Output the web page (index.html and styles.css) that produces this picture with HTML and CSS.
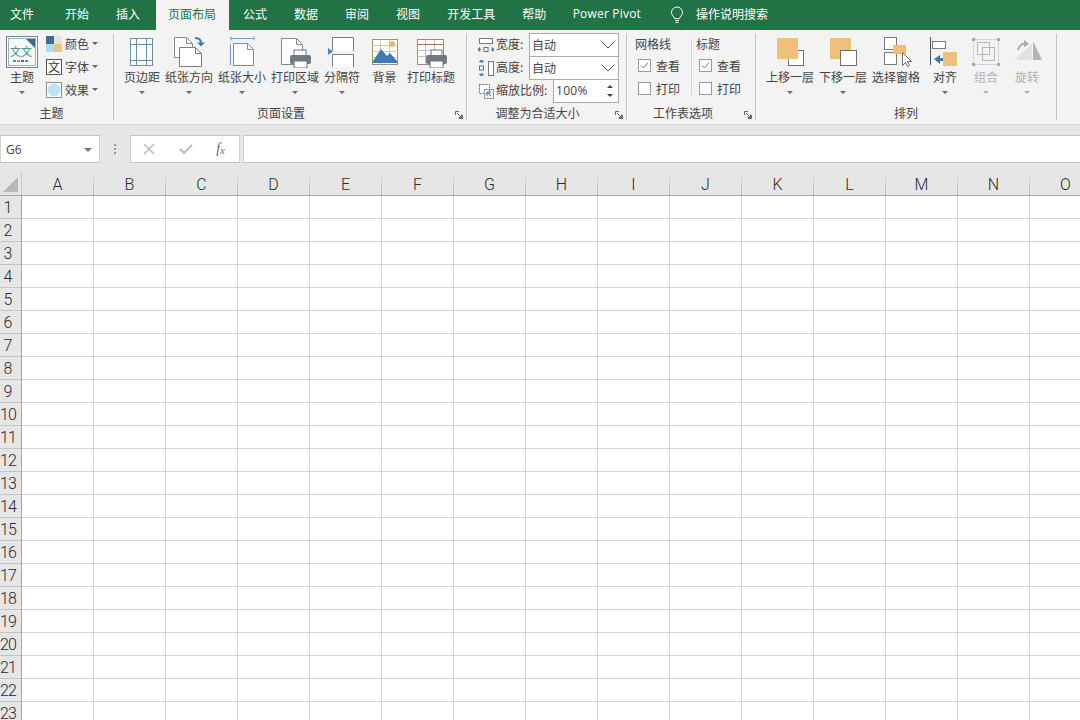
FILE: index.html
```html
<!DOCTYPE html>
<html lang="zh-CN">
<head>
<meta charset="utf-8">
<title>页面布局</title>
<link rel="stylesheet" href="styles.css">
</head>
<body>
<div class="tabs">
  <span class="tab first">文件</span><span class="tab">开始</span><span class="tab">插入</span><span class="tab active">页面布局</span><span class="tab">公式</span><span class="tab">数据</span><span class="tab">审阅</span><span class="tab">视图</span><span class="tab">开发工具</span><span class="tab">帮助</span><span class="tab latin">Power Pivot</span>
  <svg class="bulb" width="14" height="18" viewBox="0 0 14 18"><path d="M4.5 12.5C4.2 10.5 1.5 9.5 1.5 6.5a5.5 5.5 0 0 1 11 0c0 3-2.700 4-3 6z" fill="none" stroke="#fff"/><path d="M5 14.500h4M5.500 16.500h3" stroke="#fff"/></svg>
  <span class="tab search">操作说明搜索</span>
</div>

<div class="ribbon">
  <section class="group g1">
    <div class="body">
      <div class="big theme">
        <svg width="32" height="32" viewBox="0 0 32 32"><rect x=".5" y=".5" width="31" height="31" fill="#fff" stroke="#6f8594"/><rect x="2.500" y="2.500" width="27" height="27" fill="#f4f8f6" stroke="#9fb0ba"/><path d="M20 3h9v9z" fill="#3e6a8a"/><text x="4" y="20" class="svgt teal">文</text><text x="15" y="20" class="svgt teal">文</text><path d="M7 24h3v2H7z" fill="#4a9a8c"/><path d="M11 24h3v2h-3z" fill="#c98a5a"/><path d="M15 24h3v2h-3z" fill="#7a5f8e"/><path d="M19 24h3v2h-3z" fill="#5a8ab0"/></svg>
        <span class="lbl">主题</span><i class="caret"></i>
      </div>
      <div class="smalls">
        <div class="small"><svg width="16" height="16" viewBox="0 0 16 16"><rect width="8" height="8" fill="#3f6e8c"/><rect x="8" width="8" height="8" fill="#e9e3d9"/><rect y="8" width="8" height="8" fill="#aadcf2"/><rect x="8" y="8" width="8" height="8" fill="#e4c87c"/></svg><span class="sl">颜色</span><i class="caret"></i></div>
        <div class="small"><svg width="16" height="16" viewBox="0 0 16 16"><rect x=".5" y=".5" width="15" height="15" fill="#fff" stroke="#555"/><text x="2" y="13" class="svgt dark">文</text></svg><span class="sl">字体</span><i class="caret"></i></div>
        <div class="small"><svg width="16" height="16" viewBox="0 0 16 16"><rect x=".5" y=".5" width="15" height="15" fill="#fff" stroke="#8c8c8c"/><circle cx="8" cy="8" r="6.500" fill="#bfe3f7"/></svg><span class="sl">效果</span><i class="caret"></i></div>
      </div>
    </div>
    <div class="gname">主题</div>
  </section>

  <section class="group g2">
    <div class="body">
      <div class="big">
        <svg width="32" height="32" viewBox="0 0 32 32"><g fill="none" stroke="#6d8fa8"><rect x="4.500" y="2.500" width="22" height="27" fill="#fff"/><path d="M4.500 8.500h22M4.500 24.500h22M10.500 2.500v27M20.500 2.500v27"/></g></svg>
        <span class="lbl">页边距</span><i class="caret"></i>
      </div>
      <div class="big">
        <svg width="32" height="32" viewBox="0 0 32 32"><path d="M1.500 1.500h12l6 6v14h-18z" fill="#fff" stroke="#8a8a8a"/><path d="M13.500 1.500v6h6" fill="none" stroke="#8a8a8a"/><path d="M6.500 11.500h16l6 6v13h-22z" fill="#fff" stroke="#7c7c7c"/><path d="M22.500 11.500v6h6" fill="none" stroke="#7c7c7c"/><path d="M22 2c3.500 0 6 1.800 6 5" fill="none" stroke="#3f79ad" stroke-width="2"/><path d="M24 6.500h8l-4 4z" fill="#3f79ad"/></svg>
        <span class="lbl">纸张方向</span><i class="caret"></i>
      </div>
      <div class="big">
        <svg width="32" height="32" viewBox="0 0 32 32"><path d="M5 2.500h23M5 .5v4M28 .5v4M4.500 8v21" fill="none" stroke="#6d9bc4"/><path d="M7.500 7.500h14l6 6v16h-20z" fill="#fff" stroke="#8a8a8a"/><path d="M21.500 7.500v6h6" fill="none" stroke="#8a8a8a"/></svg>
        <span class="lbl">纸张大小</span><i class="caret"></i>
      </div>
      <div class="big">
        <svg width="32" height="32" viewBox="0 0 32 32"><path d="M2.500 2.500h15l6 6v20h-21z" fill="#fff" stroke="#7b8b96"/><path d="M17.500 2.500v6h6" fill="none" stroke="#8a8a8a"/><rect x="15" y="14" width="12" height="7" fill="#fff" stroke="#6a747c"/><rect x="11" y="19" width="21" height="9" rx="2" fill="#6f7980"/><rect x="15" y="25" width="13" height="7" fill="#fff" stroke="#6a747c"/></svg>
        <span class="lbl">打印区域</span><i class="caret"></i>
      </div>
      <div class="big">
        <svg width="32" height="32" viewBox="0 0 32 32"><rect x="7" y="2" width="20" height="13" fill="#fff"/><rect x="7" y="18" width="20" height="13" fill="#fff"/><path d="M6.500 15V1.500h21V15M6.500 31V18.500h21V31" fill="none" stroke="#7e7e7e"/><path d="M2 12l5 3.500L2 19z" fill="#4a86b8"/></svg>
        <span class="lbl">分隔符</span><i class="caret"></i>
      </div>
      <div class="big pad bg">
        <svg width="32" height="32" viewBox="0 0 32 32"><rect x="3.500" y="3.500" width="25" height="25" fill="#fff" stroke="#a08e70"/><path d="M3.500 9.500h25M3.500 15.500h25M3.500 21.500h25M11.500 3.500v25M20.500 3.500v25" stroke="#d8c9ae"/><circle cx="23" cy="8" r="3" fill="#d9bf7e"/><path d="M4 25L12 13l6 7 3-3 7 8v2H4z" fill="#3f7ab5"/></svg>
        <span class="lbl">背景</span>
      </div>
      <div class="big">
        <svg width="32" height="32" viewBox="0 0 32 32"><rect x="2.500" y="3.500" width="26" height="25" fill="#fff" stroke="#a8827a"/><path d="M2.500 8.500h26M2.500 14.500h26M2.500 20.500h26M10.500 3.500v25M19.500 3.500v25" stroke="#c9bcb8"/><path d="M2.500 8.500h26" stroke="#9c6f60"/><rect x="16" y="14" width="11" height="7" fill="#fff" stroke="#6a747c"/><rect x="11" y="19" width="21" height="9" rx="2" fill="#6f7980"/><rect x="15" y="25" width="13" height="7" fill="#fff" stroke="#6a747c"/></svg>
        <span class="lbl">打印标题</span>
      </div>
    </div>
    <div class="gname">页面设置</div>
    <svg class="launch" width="8" height="8" viewBox="0 0 8 8"><path d="M.5 4V.5H4M7.500 4v3.500H4M2 2l4.500 4.500M3.500 6.500h3v-3" fill="none" stroke="#666"/></svg>
  </section>

  <section class="group g3">
    <div class="body col">
      <div class="frow">
        <svg width="16" height="16" viewBox="0 0 16 16"><rect x="1.500" y="1.500" width="13" height="5" fill="#fff" stroke="#777"/><path d="M0 12.500h3M2 10.500L0 12.500l2 2M16 12.500h-3M14 10.500l2 2-2 2" fill="none" stroke="#3f79ad" stroke-width="1.200"/><rect x="6" y="10.500" width="4" height="4" fill="#fff" stroke="#3f79ad"/></svg>
        <span class="flbl">宽度:</span>
        <div class="select"><span>自动</span><svg width="14" height="8" viewBox="0 0 14 8"><path d="M.5.500L7 7 13.500.5" fill="none" stroke="#555"/></svg></div>
      </div>
      <div class="frow">
        <svg width="16" height="16" viewBox="0 0 16 16"><rect x="10.500" y="1.500" width="5" height="14" fill="#fff" stroke="#777"/><path d="M3.500 0v3M1.500 2l2-2 2 2M3.500 16v-3M1.500 14l2 2 2-2" fill="none" stroke="#3f79ad" stroke-width="1.200"/><rect x="1.500" y="6" width="4" height="4" fill="#fff" stroke="#3f79ad"/></svg>
        <span class="flbl">高度:</span>
        <div class="select"><span>自动</span><svg width="14" height="8" viewBox="0 0 14 8"><path d="M.5.500L7 7 13.500.5" fill="none" stroke="#555"/></svg></div>
      </div>
      <div class="frow">
        <svg width="16" height="16" viewBox="0 0 16 16"><rect x="1.500" y="1.500" width="10" height="9" fill="#fff" stroke="#777" stroke-dasharray="2 1"/><rect x="6.500" y="6.500" width="9" height="9" fill="none" stroke="#8aa0b0"/><path d="M9 9l4 4M9 13V9h4" fill="none" stroke="#3f79ad"/></svg>
        <span class="flbl wide">缩放比例:</span>
        <div class="spin"><span>100%</span><div class="arrows"><i class="up"></i><i class="down"></i></div></div>
      </div>
    </div>
    <div class="gname">调整为合适大小</div>
    <svg class="launch" width="8" height="8" viewBox="0 0 8 8"><path d="M.5 4V.5H4M7.500 4v3.500H4M2 2l4.500 4.500M3.500 6.500h3v-3" fill="none" stroke="#666"/></svg>
  </section>

  <section class="group g4">
    <div class="body">
      <div class="opt sepr">
        <div class="ohead">网格线</div>
        <div class="chk"><svg width="13" height="13" viewBox="0 0 13 13"><rect x=".5" y=".5" width="12" height="12" fill="#fff" stroke="#9a9a9a"/><path d="M3 6.500l2.500 2.500L10 3.500" fill="none" stroke="#777"/></svg><span>查看</span></div>
        <div class="chk"><svg width="13" height="13" viewBox="0 0 13 13"><rect x=".5" y=".5" width="12" height="12" fill="#fff" stroke="#9a9a9a"/></svg><span>打印</span></div>
      </div>
      <div class="opt">
        <div class="ohead">标题</div>
        <div class="chk"><svg width="13" height="13" viewBox="0 0 13 13"><rect x=".5" y=".5" width="12" height="12" fill="#fff" stroke="#9a9a9a"/><path d="M3 6.500l2.500 2.500L10 3.500" fill="none" stroke="#777"/></svg><span>查看</span></div>
        <div class="chk"><svg width="13" height="13" viewBox="0 0 13 13"><rect x=".5" y=".5" width="12" height="12" fill="#fff" stroke="#9a9a9a"/></svg><span>打印</span></div>
      </div>
    </div>
    <div class="gname">工作表选项</div>
    <svg class="launch" width="8" height="8" viewBox="0 0 8 8"><path d="M.5 4V.5H4M7.500 4v3.500H4M2 2l4.500 4.500M3.500 6.500h3v-3" fill="none" stroke="#666"/></svg>
  </section>

  <section class="group g5">
    <div class="body">
      <div class="big">
        <svg width="32" height="32" viewBox="0 0 32 32"><rect x="14.500" y="14.500" width="15" height="15" fill="#fff" stroke="#6e6e6e"/><rect x="3" y="2" width="21" height="21" fill="#eec07a"/></svg>
        <span class="lbl">上移一层</span><i class="caret"></i>
      </div>
      <div class="big">
        <svg width="32" height="32" viewBox="0 0 32 32"><rect x="3" y="2" width="21" height="21" fill="#eec07a"/><rect x="13.500" y="14.500" width="16" height="15" fill="#fff" stroke="#6e6e6e"/></svg>
        <span class="lbl">下移一层</span><i class="caret"></i>
      </div>
      <div class="big">
        <svg width="32" height="32" viewBox="0 0 32 32"><rect x="4.500" y="1.500" width="12" height="12" fill="#fff" stroke="#7a7a7a"/><rect x="4.500" y="16.500" width="12" height="12" fill="#fff" stroke="#7a7a7a"/><rect x="13" y="9" width="13" height="9" fill="#eec07a"/><path d="M22.500 16.500v13l3-3 2 4 2-1-2-4h4z" fill="#fff" stroke="#6e6e6e"/></svg>
        <span class="lbl">选择窗格</span>
      </div>
      <div class="big pad nudge">
        <svg width="32" height="32" viewBox="0 0 32 32"><path d="M1.500 1v28" stroke="#555"/><rect x="3.500" y="5.500" width="13" height="7" fill="#fff" stroke="#7a7a7a"/><path d="M5 23l6-4v3h3v3h-3v3z" fill="#3f79ad"/><rect x="14" y="16" width="14" height="14" fill="#eec07a"/></svg>
        <span class="lbl">对齐</span><i class="caret"></i>
      </div>
      <div class="big pad off">
        <svg width="32" height="32" viewBox="0 0 32 32"><path d="M3.500 3.500h25v25h-25z" fill="none" stroke="#c9c9c9" stroke-dasharray="3 1"/><rect x="7.500" y="6.500" width="12" height="12" fill="#f3f3f3" stroke="#b8b8b8"/><rect x="12.500" y="11.500" width="12" height="13" fill="none" stroke="#b8b8b8"/><g fill="#a8a8a8"><rect x="2" y="2" width="3" height="3"/><rect x="27" y="2" width="3" height="3"/><rect x="2" y="27" width="3" height="3"/><rect x="27" y="27" width="3" height="3"/></g></svg>
        <span class="lbl">组合</span><i class="caret"></i>
      </div>
      <div class="big pad off">
        <svg width="32" height="32" viewBox="0 0 32 32"><path d="M22 5l9 19H22z" fill="#b5b5b5"/><path d="M3 24h18V8z" fill="#e1e1e1"/><path d="M7 14c1-5 5-7 9-6" fill="none" stroke="#a8a8a8" stroke-width="2"/><path d="M13 4l5 4-5 3z" fill="#a8a8a8"/></svg>
        <span class="lbl">旋转</span><i class="caret"></i>
      </div>
    </div>
    <div class="gname">排列</div>
  </section>
</div>

<div class="fbar">
  <div class="namebox"><span>G6</span><i class="caret dark"></i></div>
  <div class="grip"><i></i><i></i><i></i></div>
  <div class="fbtns">
    <svg width="12" height="12" viewBox="0 0 12 12"><path d="M1 1l10 10M11 1L1 11" stroke="#bdbdbd" stroke-width="1.600" fill="none"/></svg>
    <svg width="14" height="12" viewBox="0 0 14 12"><path d="M1 6l4 4 8-8" stroke="#bdbdbd" stroke-width="2" fill="none"/></svg>
    <span class="fx">f<sub>x</sub></span>
  </div>
  <div class="finput"></div>
</div>

<div class="colhead">
  <div class="corner"><svg width="16" height="16" viewBox="0 0 16 16"><path d="M15 0v15H0z" fill="#b9b9b9"/></svg></div>
  <div class="c">A</div><div class="c">B</div><div class="c">C</div><div class="c">D</div><div class="c">E</div><div class="c">F</div><div class="c">G</div><div class="c">H</div><div class="c">I</div><div class="c">J</div><div class="c">K</div><div class="c">L</div><div class="c">M</div><div class="c">N</div><div class="c">O</div>
</div>

<div class="sheet">
  <div class="rowhead">
    <div class="r">1</div><div class="r">2</div><div class="r">3</div><div class="r">4</div><div class="r">5</div><div class="r">6</div><div class="r">7</div><div class="r">8</div><div class="r">9</div><div class="r">10</div><div class="r">11</div><div class="r">12</div><div class="r">13</div><div class="r">14</div><div class="r">15</div><div class="r">16</div><div class="r">17</div><div class="r">18</div><div class="r">19</div><div class="r">20</div><div class="r">21</div><div class="r">22</div><div class="r">23</div>
  </div>
  <div class="cells"></div>
</div>
</body>
</html>
```

FILE: styles.css
```css
* { box-sizing: border-box; }
html, body { margin: 0; height: 720px; overflow: hidden; }
body {
  display: flex;
  flex-direction: column;
  width: 1080px;
  background: #fff;
  color: #444;
  font: 12px/16px "Noto Sans CJK SC", "Noto Sans", sans-serif;
}
svg { display: block; flex: none; }

/* tabs */
.tabs {
  flex: none;
  height: 30px;
  display: flex;
  align-items: stretch;
  gap: 2px;
  background: #217346;
  color: #fff;
  white-space: nowrap;
}
.tab { padding: 0 12.5px; line-height: 28px; }
.tab.first { padding-left: 10px; padding-right: 16.5px; }
.tab.active { background: #f3f3f3; color: #217346; margin-left: 1px; }
.tab.latin { font-family: "Open Sans", sans-serif; letter-spacing: .2px; padding: 0 14px 0 12px; }
.bulb { align-self: center; margin: 0 0 0 13px; }
.tab.search { padding-left: 10px; }

/* ribbon */
.ribbon {
  flex: none;
  height: 95px;
  display: flex;
  padding-top: 4px;
  background: #f3f3f3;
  border-bottom: 1px solid #d6d6d6;
}
.group {
  position: relative;
  height: 86px;
  display: flex;
  flex-direction: column;
  border-right: 1px solid #c4c4c4;
}
.g1 { width: 114px; padding-left: 6px; }
.g2 { width: 353px; padding-left: 10px; }
.g3 { width: 160px; padding-left: 11px; }
.g4 { width: 129px; padding-left: 8px; }
.g5 { width: 301px; padding-left: 10px; }
.body { height: 71px; display: flex; gap: 5px; }
.body.col { flex-direction: column; gap: 0; margin-top: -1px; height: 72px; }
.gname { text-align: center; line-height: 15px; }
.g1 .gname { margin-left: -16px; }
.g2 .gname { margin-left: -28px; }
.g3 .gname { margin-left: -29px; }
.g4 .gname { margin-left: -24px; }
.g5 .gname { margin-left: -10px; }
.launch { position: absolute; right: 3px; bottom: 1px; }

.big {
  display: flex;
  flex-direction: column;
  align-items: center;
  padding-top: 2px;
}
.big.theme { width: 32px; margin-right: 3px; }
.big.pad { padding-left: 6px; padding-right: 6px; }
.big.bg { padding-left: 7.5px; padding-right: 5.5px; }
.big.nudge { margin-left: 2px; }
.big svg { margin: 0 -4px; }
.big.off { color: #b1b1b1; }
.lbl { line-height: 16px; margin-top: 1px; white-space: nowrap; }
.caret {
  display: block;
  width: 0;
  height: 0;
  margin-top: 6px;
  border: 3px solid transparent;
  border-top-color: #666;
  border-bottom-width: 0;
}
.off .caret { border-top-color: #b1b1b1; }

.svgt { font-size: 11px; }
.teal { fill: #2d8a7c; }
.dark { fill: #333; font-size: 12px; }

.smalls { display: flex; flex-direction: column; margin-top: -2px; }
.small { height: 23px; display: flex; align-items: center; }
.sl { margin-left: 3px; }
.small .caret { margin: 0 0 0 3px; }

/* scale to fit */
.frow { height: 23px; display: flex; align-items: center; }
.flbl { width: 35px; padding-left: 2px; white-space: nowrap; margin-top: -1px; }
.flbl.wide { width: 59px; }
.select, .spin {
  align-self: flex-start;
  height: 24px;
  display: flex;
  align-items: center;
  justify-content: space-between;
  background: #fff;
  border: 1px solid #ababab;
  padding: 0 3px 1px 2px;
}
.select { width: 90px; }
.spin { width: 66px; padding-right: 5px; font-family: "Open Sans", sans-serif; letter-spacing: .3px; }
.arrows { display: flex; flex-direction: column; gap: 6px; }
.arrows i { display: block; width: 0; height: 0; border: 3px solid transparent; }
.up { border-top-width: 0 !important; border-bottom-color: #444 !important; }
.down { border-bottom-width: 0 !important; border-top-color: #444 !important; }

/* sheet options */
.g4 .body { gap: 0; }
.opt { position: relative; display: flex; flex-direction: column; padding-top: 2px; }
.opt.sepr { width: 57px; margin-right: 4px; }
.opt.sepr::after {
  content: "";
  position: absolute;
  right: 0;
  top: 5px;
  bottom: 10px;
  width: 1px;
  background: #d4d4d4;
}
.ohead { height: 15px; margin-bottom: 3px; line-height: 15px; }
.chk { height: 23px; display: flex; align-items: center; gap: 5px; padding-left: 3px; }

/* formula bar */
.fbar {
  flex: none;
  height: 47px;
  display: flex;
  padding-top: 10px;
  padding-bottom: 9px;
  background: #e6e6e6;
}
.namebox, .fbtns, .finput {
  background: #fff;
  border: 1px solid #d0d0d0;
  border-top-color: #c4c4c4;
  border-bottom-color: #c4c4c4;
}
.namebox {
  width: 100px;
  display: flex;
  align-items: center;
  justify-content: space-between;
  padding: 2px 7px 0 5px;
  font-family: "Open Sans", sans-serif;
}
.namebox .caret { margin: 0; border-width: 4px; border-bottom-width: 0; border-top-color: #777; }
.grip { width: 30px; display: flex; flex-direction: column; align-items: center; justify-content: center; gap: 2px; }
.grip i { width: 2px; height: 2px; background: #9a9a9a; }
.fbtns {
  width: 110px;
  margin-right: 3px;
  display: flex;
  align-items: center;
  justify-content: space-between;
  padding: 0 14px 0 12px;
}
.fx { font: italic 14px/16px "Liberation Serif", serif; color: #666; }
.fx sub { font-size: 11px; line-height: 0; vertical-align: -1px; }
.finput { flex: 1; border-right: 0; }

/* column headers */
.colhead {
  flex: none;
  height: 24px;
  display: flex;
  background: #e6e6e6;
  border-bottom: 1px solid #a6a6a6;
  font: 300 16px/25px Roboto, sans-serif;
  color: #2a2a2a;
}
.corner { width: 22px; padding: 5px 0 0 3px; border-right: 1px solid #c8c8c8; flex: none; }
.c {
  flex: none;
  width: 72px;
  text-align: center;
  border-right: 1px solid #b4b4b4;
  border-image: linear-gradient(#e6e6e6, #b0b0b0) 1;
}

/* sheet */
.sheet { flex: 1; min-height: 0; display: flex; overflow: hidden; }
.rowhead {
  flex: none;
  width: 22px;
  background: #e6e6e6;
  background-image: repeating-linear-gradient(to bottom, transparent 0 22px, #c4c4c4 22px 23px);
  border-right: 1px solid #a6a6a6;
  font: 300 16px/23px Roboto, sans-serif;
  color: #2a2a2a;
}
.r {
  height: 23px;
  width: 15px;
  text-align: center;
  letter-spacing: -1px;
  white-space: nowrap;
}
.cells {
  flex: 1;
  background-color: #fff;
  background-image:
    repeating-linear-gradient(to bottom, transparent 0 22px, #d6d6d6 22px 23px),
    repeating-linear-gradient(to right, transparent 0 71px, #d6d6d6 71px 72px);
}
```
